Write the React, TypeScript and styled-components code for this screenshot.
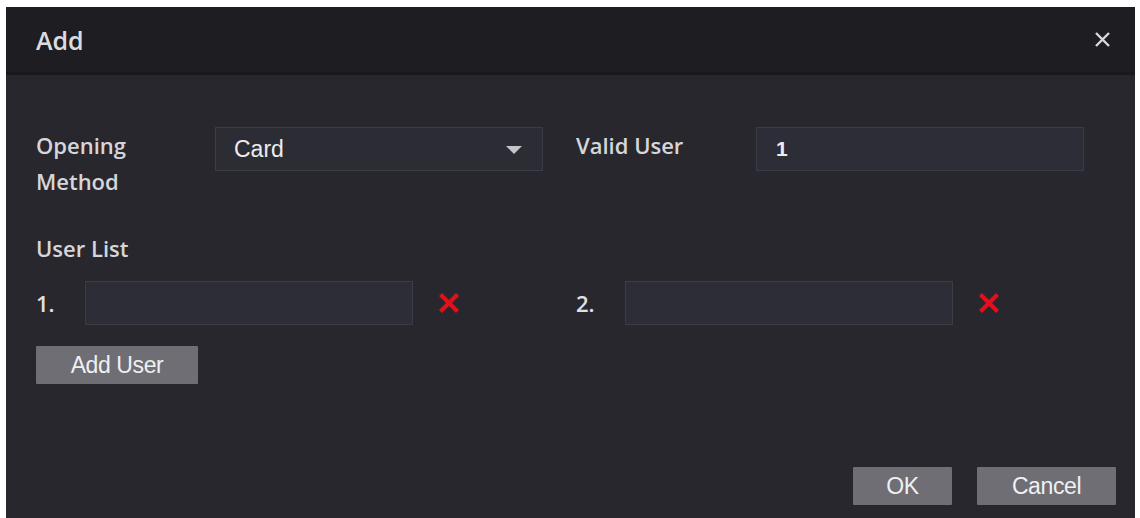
import React, {FC} from 'react';
import styled, {createGlobalStyle} from 'styled-components';

const GlobalStyle = createGlobalStyle`
  html, body {
    margin: 0;
    padding: 0;
    background: #ffffff;
  }
  body {
    font-family: 'Open Sans', 'Liberation Sans', Arial, sans-serif;
  }
`;

type UserRowProps = {
  index: number;
};

const RemoveIcon: FC = () => (
  <svg width="24" height="24" viewBox="0 0 24 24">
    <path d="M5 5 L19 19 M19 5 L5 19" stroke="#e3101c" strokeWidth="4.2" strokeLinecap="square" />
  </svg>
);

const UserRow: FC<UserRowProps> = ({index}) => (
  <UserItem>
    <RowNumber>{index}.</RowNumber>
    <TextBox />
    <RemoveButton>
      <RemoveIcon />
    </RemoveButton>
  </UserItem>
);

export default function App() {
  return (
    <Page>
      <GlobalStyle />
      <Dialog>
        <Header>
          <Title>Add</Title>
          <CloseButton>
            <svg width="17" height="17" viewBox="0 0 17 17">
              <path d="M2 2 L15 15 M15 2 L2 15" stroke="#d8d8dc" strokeWidth="2.4" />
            </svg>
          </CloseButton>
        </Header>
        <Body>
          <FieldRow>
            <Label>
              Opening
              <br />
              Method
            </Label>
            <Select>
              <span>Card</span>
              <Caret />
            </Select>
            <Label $offset>Valid User</Label>
            <TextBox>1</TextBox>
          </FieldRow>

          <SectionTitle>User List</SectionTitle>
          <UserGrid>
            <UserRow index={1} />
            <UserRow index={2} />
          </UserGrid>

          <GreyButton $width={162}>Add User</GreyButton>
        </Body>
        <Footer>
          <GreyButton $width={99}>OK</GreyButton>
          <GreyButton $width={139}>Cancel</GreyButton>
        </Footer>
      </Dialog>
    </Page>
  );
}

const Page = styled.div`
  width: 1140px;
  height: 518px;
  overflow: hidden;
  padding: 7px 5px 0 6px;
  box-sizing: border-box;
`;

const Dialog = styled.div`
  width: 1129px;
  height: 520px;
  background: #28272d;
  display: flex;
  flex-direction: column;
  color: #e4e4e8;
`;

const Header = styled.div`
  height: 68px;
  background: #1e1e22;
  border-bottom: 3px solid #19191c;
  display: flex;
  align-items: center;
  justify-content: space-between;
  padding: 0 24px 0 30px;
  box-sizing: border-box;
`;

const Title = styled.div`
  font-size: 25px;
  font-weight: 600;
  color: #dcdce0;
`;

const CloseButton = styled.div`
  display: flex;
  margin-top: -1px;
`;

const Body = styled.div`
  padding: 52px 30px 0 30px;
  display: flex;
  flex-direction: column;
  align-items: flex-start;
`;

const FieldRow = styled.div`
  display: flex;
  align-items: flex-start;
`;

const Label = styled.div<{$offset?: boolean}>`
  width: ${(p) => (p.$offset ? '180px' : '179px')};
  margin-left: ${(p) => (p.$offset ? '33px' : '0')};
  font-size: 22px;
  font-weight: 600;
  line-height: 36px;
  color: #d6d6da;
`;

const Select = styled.div`
  width: 328px;
  height: 44px;
  box-sizing: border-box;
  background: #2b2c34;
  border: 1px solid #3b3c45;
  display: flex;
  align-items: center;
  justify-content: space-between;
  padding: 0 20px 0 18px;
  font-family: 'Liberation Sans', Arial, sans-serif;
  font-size: 23px;
  color: #ececf0;
`;

const Caret = styled.span`
  width: 0;
  height: 0;
  border-left: 8px solid transparent;
  border-right: 8px solid transparent;
  border-top: 8px solid #c4c4ca;
  margin-top: 2px;
`;

const TextBox = styled.div`
  width: 328px;
  height: 44px;
  box-sizing: border-box;
  background: #2c2d36;
  border: 1px solid #3b3c45;
  display: flex;
  align-items: center;
  padding-left: 19px;
  font-family: 'Liberation Sans', Arial, sans-serif;
  font-weight: bold;
  font-size: 21px;
  color: #ececf0;
`;

const SectionTitle = styled.div`
  font-size: 22px;
  font-weight: 600;
  line-height: 36px;
  margin-top: 31px;
  color: #d6d6da;
`;

const UserGrid = styled.div`
  display: grid;
  grid-template-columns: 540px 540px;
  margin-top: 15px;
`;

const UserItem = styled.div`
  display: flex;
  align-items: center;
`;

const RowNumber = styled.span`
  width: 49px;
  font-size: 22px;
  font-weight: 600;
  color: #e0e0e4;
`;

const RemoveButton = styled.span`
  display: flex;
  margin-left: 24px;
`;

const GreyButton = styled.button<{$width: number}>`
  width: ${(p) => p.$width}px;
  height: 38px;
  background: #6e6e74;
  border: none;
  border-radius: 1px;
  color: #f0f0f2;
  font-family: 'Liberation Sans', Arial, sans-serif;
  font-size: 23px;
  letter-spacing: -0.4px;
  padding: 0;
  margin-top: 21px;
  cursor: pointer;
`;

const Footer = styled.div`
  display: flex;
  justify-content: flex-end;
  gap: 25px;
  padding: 83px 19px 0 0;

  ${GreyButton} {
    margin-top: 0;
  }
`;
